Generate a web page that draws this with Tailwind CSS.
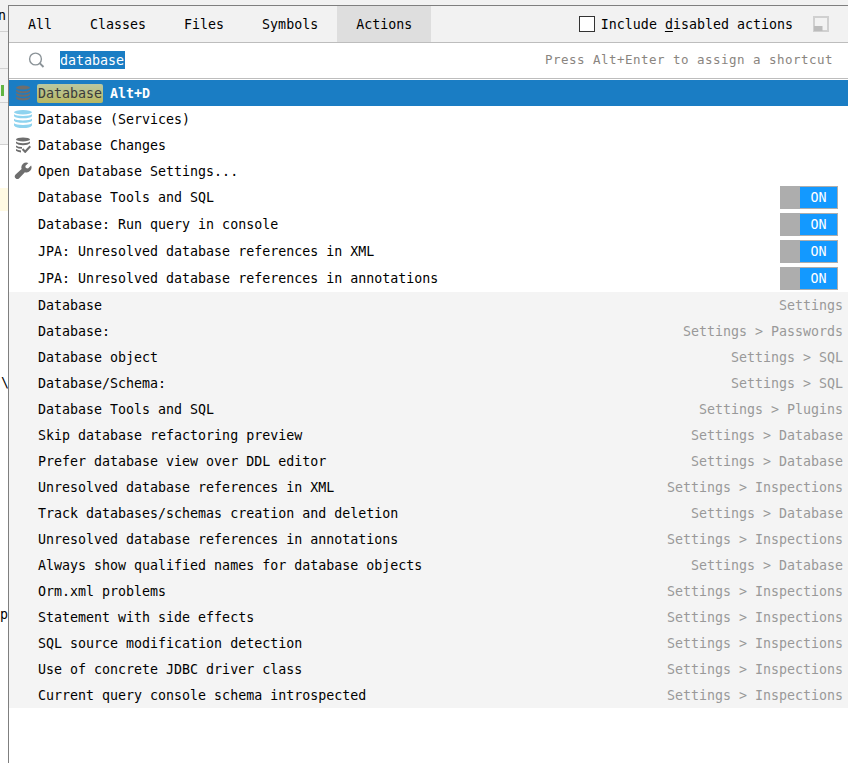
<!DOCTYPE html>
<html lang="en">
<head>
<meta charset="utf-8">
<title>Search Everywhere</title>
<script src="https://cdn.jsdelivr.net/npm/@tailwindcss/browser@4"></script>
</head>
<body class="h-[763px] w-[848px] overflow-hidden bg-white font-['DejaVu_Sans_Mono',monospace] text-[13.3px] text-black">
<div class="flex h-full flex-col">
  <div class="h-[5px] shrink-0 bg-[#f2f2f2]"></div>
  <div class="flex min-h-0 flex-1">
    <!-- editor edge behind the popup -->
    <div class="flex w-2 shrink-0 flex-col overflow-hidden">
      <div class="flex h-[27px] shrink-0 justify-end border-b border-[#d1d1d1] bg-[#f2f2f2] pr-[2px] leading-[21px]">n</div>
      <div class="h-[37px] shrink-0 border-b border-[#d1d1d1] bg-[#f2f2f2]"></div>
      <div class="h-[34px] shrink-0 border-b border-[#d1d1d1] bg-[#f2f2f2] pt-4"><div class="ml-px h-[11px] w-[3px] bg-[#62b543]"></div></div>
      <div class="h-[42px] shrink-0 border-b border-[#d1d1d1] bg-[#f2f2f2]"></div>
      <div class="mt-[43px] h-[23px] shrink-0 bg-[#fffae3]"></div>
      <div class="mt-[162px] h-5 shrink-0 pl-px leading-5">\</div>
      <div class="mt-[212px] flex h-5 shrink-0 justify-end leading-5"><span>p</span></div>
    </div>
    <main class="flex min-w-0 flex-1 flex-col border-t border-l border-[#7f7f7f] bg-white">
      <header class="flex h-[37px] shrink-0 items-center border-b border-[#bdbdbd] bg-[#f2f2f2]">
        <nav class="flex h-full leading-[38px]">
          <span class="px-[19px]">All</span><span class="px-[19px]">Classes</span><span class="px-[19px]">Files</span><span class="px-[19px]">Symbols</span><span class="h-9 bg-[#dedede] px-[19px]">Actions</span>
        </nav>
        <div class="ml-auto flex items-center pr-[19px]">
          <span class="mr-[6px] h-4 w-4 border border-[#333] bg-white"></span>
          <span class="pt-[2px]">Include <span class="underline underline-offset-2">d</span>isabled actions</span>
          <svg class="ml-5 h-4 w-4" viewBox="0 0 16 16"><path d="M1 1h14v14H1z" fill="none" stroke="#d0d0d0" stroke-width="2"/><path d="M1 10h8.500V15H1z" fill="#bcbcbc"/></svg>
        </div>
      </header>
      <div class="flex h-[36px] shrink-0 items-center border-b border-[#bdbdbd] pr-[15px] pl-[19px]">
        <svg class="mr-[15px] mb-[2px] h-[18px] w-[17px]" viewBox="0 0 17 18" fill="none" stroke="#8b9398"><circle cx="7.500" cy="8" r="5.900" stroke-width="1.400"/><path d="M11.700 12.200 15.500 16" stroke-width="1.900"/></svg>
        <span class="-mt-px h-[18px] w-[65px] bg-[#1a7dc4] leading-[20px] text-white">database</span>
        <span class="ml-auto text-[12.500px] tracking-[0.475px] text-[#8a8580]">Press Alt+Enter to assign a shortcut</span>
      </div>
      <div id="results" class="flex flex-col pt-px"></div>
    </main>
  </div>
</div>
<script>
const icons = {
  db: '<svg class="ml-[6px] h-4 w-4" viewBox="0 0 16 16" fill="#6e6e6e"><ellipse cx="8" cy="2.600" rx="7" ry="2"/><path d="M1 4.600Q3 6.200 8 6.200T15 4.600V6.300Q13 8.300 8 8.300T1 6.300zM1 8.100Q3 9.700 8 9.700T15 8.100V9.800Q13 11.800 8 11.800T1 9.800zM1 11.600Q3 13.200 8 13.200T15 11.600V13.200Q13 15.400 8 15.400T1 13.200z"/></svg>',
  services: '<svg class="ml-[5px] h-[18px] w-[18px]" viewBox="0 0 18 18" fill="#8ed3ef"><ellipse cx="9" cy="2.200" rx="9" ry="2.200"/><path d="M0 4.200Q2 5.900 9 5.900T18 4.200V6.200Q16 8.300 9 8.300T0 6.200zM0 8.700Q2 10.400 9 10.400T18 8.700V10.700Q16 12.800 9 12.800T0 10.700zM0 13.300Q2 15 9 15T18 13.300V15.400Q16 18 9 18T0 15.400z"/></svg>',
  changes: '<svg class="ml-[6px] h-4 w-4" viewBox="0 0 16 16" fill="#6e6e6e"><ellipse cx="8" cy="2.400" rx="7" ry="2"/><path d="M1 4.500Q3 6.200 8 6.200T15 4.500V6.300Q13 8.200 8 8.200T1 6.300zM1 8.400Q3 9.900 7 10V11.800Q3 11.800 1 10.200zM1 12.100Q3 13.400 6 13.600V15.400Q2.500 15.100 1 13.700z"/><path d="m7.500 12.100 2.700 2.700L15.300 9.300" fill="none" stroke="#6e6e6e" stroke-width="2.100"/></svg>',
  wrench: '<svg class="ml-[5px] h-[18px] w-[18px]" viewBox="0 0 18 18" fill="#6e6e6e"><path d="M14.400 0.900A5 5 0 0 0 7.600 7L1.600 12.600A2.500 2.500 0 1 0 5.200 16.200L10.900 10.200A5 5 0 0 0 17.100 3.500L14 6.600 11.800 6.100 11.300 4Z"/></svg>'
};
const actions = [
  ['Database', 'db'], ['Database (Services)', 'services'], ['Database Changes', 'changes'], ['Open Database Settings...', 'wrench'],
  ['Database Tools and SQL'], ['Database: Run query in console'], ['JPA: Unresolved database references in XML'], ['JPA: Unresolved database references in annotations']
];
const settings = [
  ['Database', ''], ['Database:', 'Passwords'], ['Database object', 'SQL'], ['Database/Schema:', 'SQL'], ['Database Tools and SQL', 'Plugins'],
  ['Skip database refactoring preview', 'Database'], ['Prefer database view over DDL editor', 'Database'], ['Unresolved database references in XML', 'Inspections'],
  ['Track databases/schemas creation and deletion', 'Database'], ['Unresolved database references in annotations', 'Inspections'],
  ['Always show qualified names for database objects', 'Database'], ['Orm.xml problems', 'Inspections'], ['Statement with side effects', 'Inspections'],
  ['SQL source modification detection', 'Inspections'], ['Use of concrete JDBC driver class', 'Inspections'], ['Current query console schema introspected', 'Inspections']
];
const toggle = '<span class="ml-auto mr-[10px] flex h-[23px] w-[58px] justify-end bg-[#adadad] p-px"><span class="w-[37px] bg-[#1399ff] text-center leading-[21px] text-white">ON</span></span>';
let html = '';
actions.forEach(([label, icon], i) => {
  const text = i === 0
    ? '<span class="-ml-px h-[19px] w-[66px] rounded-[2px] bg-linear-to-b from-[#b9c8a1] to-[#b9b75e] pl-px leading-[19px] text-[#3b3b3b]">Database</span><b class="ml-[7px] pt-[2px] text-white">Alt+D</b>'
    : `<span class="${icon ? 'pt-[2px]' : ''}">${label}</span>`;
  html += `<div class="flex items-center ${i < 4 ? 'h-[26px]' : 'h-[27px]'} ${i === 0 ? 'bg-[#1a7dc4]' : ''}"><span class="flex w-[29px] shrink-0">${icon ? icons[icon] : ''}</span>${text}${icon ? '' : toggle}</div>`;
});
settings.forEach(([label, path]) => {
  html += `<div class="flex h-[26px] items-center justify-between bg-[#f4f4f4] pt-[2px] pr-[5px] pl-[29px]"><span>${label}</span><span class="text-[#999]">Settings${path ? ' &gt; ' + path : ''}</span></div>`;
});
document.getElementById('results').innerHTML = html;
</script>
</body>
</html>
